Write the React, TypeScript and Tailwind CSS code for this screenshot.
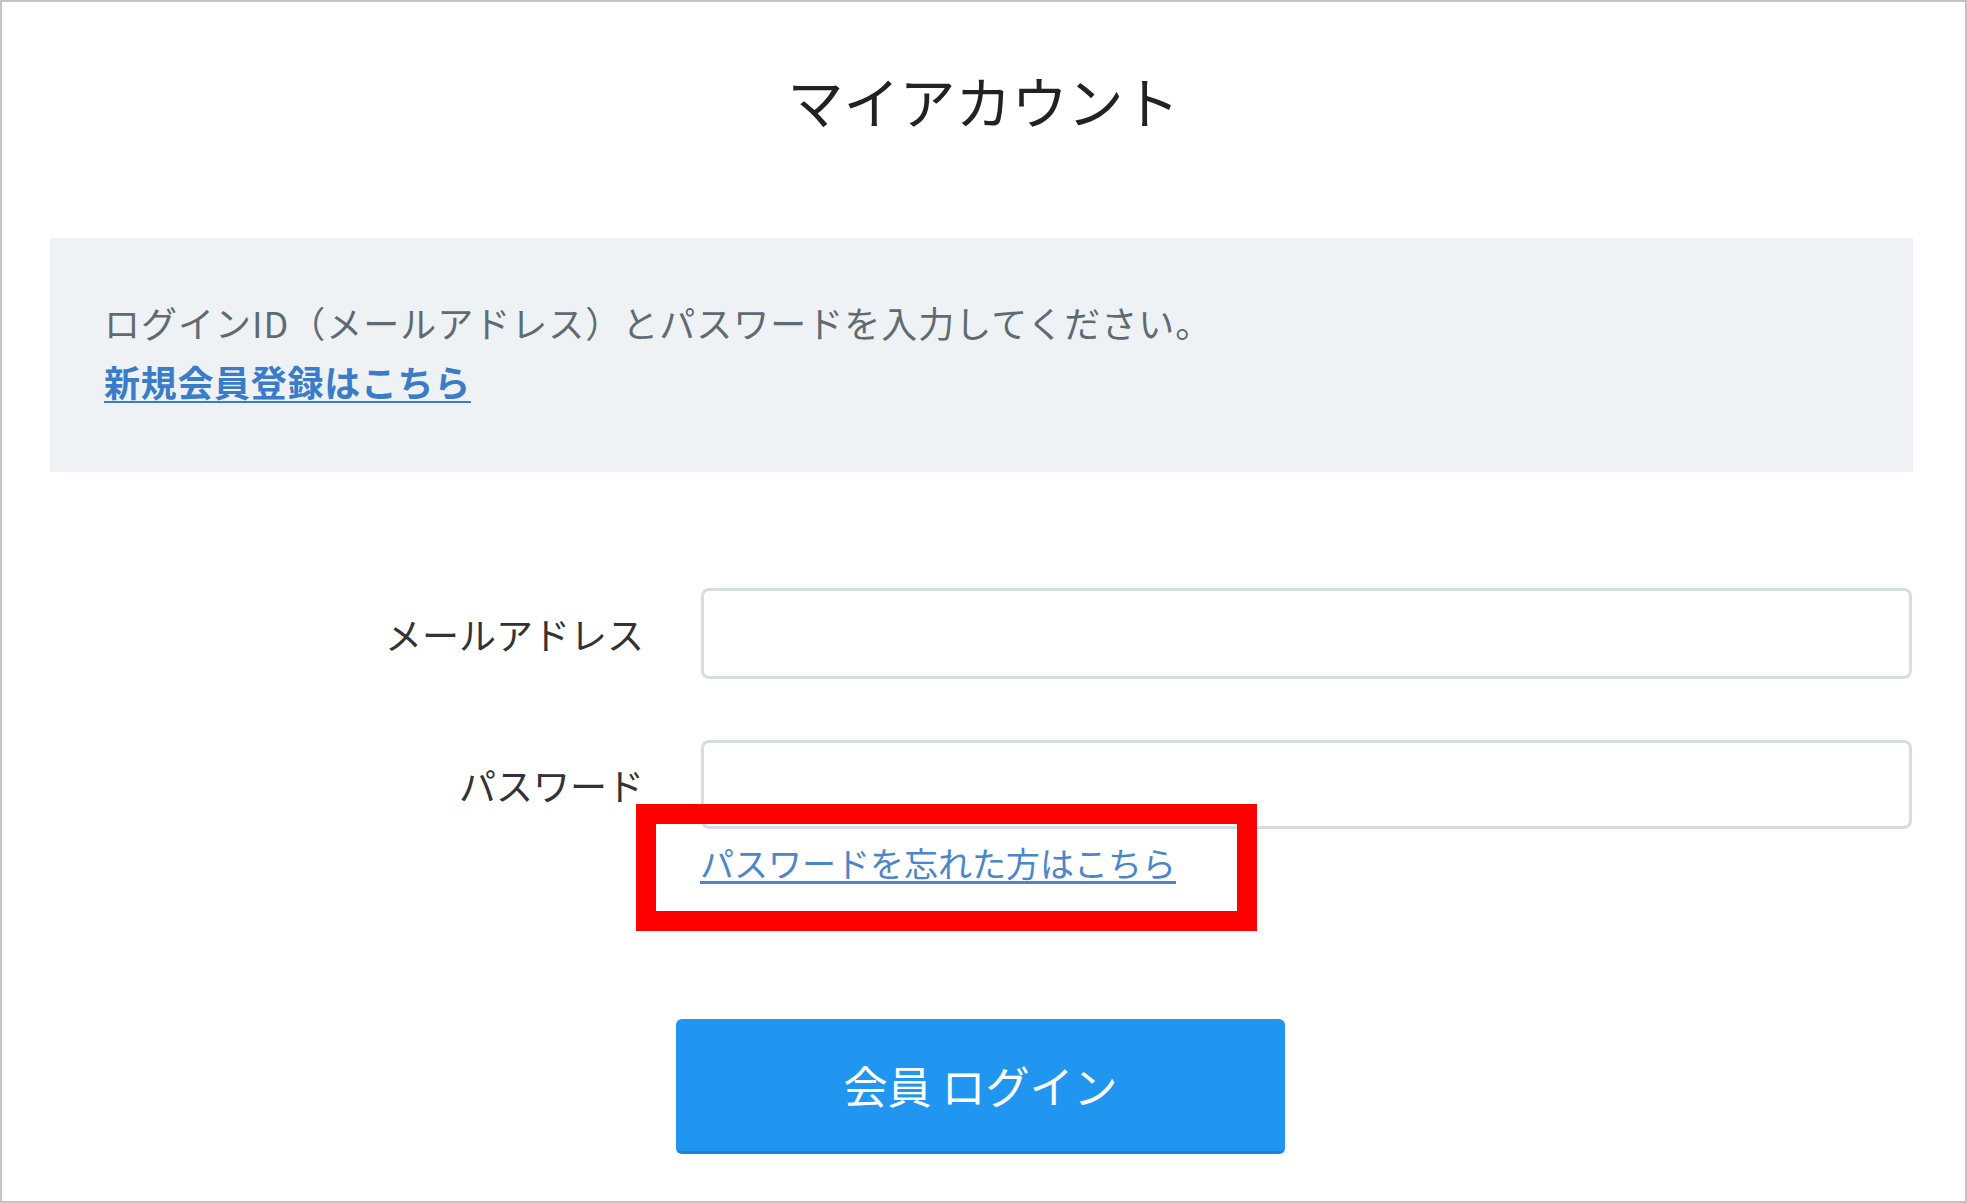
import React from "react";

export default function App() {
  const font = { fontFamily: '"Noto Sans CJK JP", "Noto Sans", sans-serif' };
  return (
    <div
      className="relative w-[1967px] h-[1203px] border-2 border-[#c4c4c4] bg-white overflow-hidden"
      style={font}
    >
      <div className="mt-[70px] h-[56px] leading-[56px] text-[56px] text-[#222] text-center">
        マイアカウント
      </div>

      <div className="mt-[110px] ml-[48px] w-[1863px] h-[234px] bg-[#eef2f5] pl-[54px] pt-[55px]">
        <div className="leading-[59px] text-[36px] tracking-[1px] text-[#5f6a72]">
          ログインID（メールアドレス）とパスワードを入力してください。
        </div>
        <div className="leading-[59px]">
          <a className="text-[36px] tracking-[0.7px] font-bold text-[#3a7cc7] underline decoration-2 underline-offset-4">
            新規会員登録はこちら
          </a>
        </div>
      </div>

      <div className="mt-[116px] flex flex-col gap-[61px]">
        <div className="flex items-center gap-[57px]">
          <label className="w-[642px] text-right text-[37px] leading-[40px] text-[#333]">
            メールアドレス
          </label>
          <div className="w-[1211px] h-[91px] border-[3px] border-[#d6dee3] rounded-[8px] bg-white" />
        </div>
        <div className="flex items-center gap-[57px]">
          <label className="w-[642px] text-right text-[37px] leading-[40px] text-[#333]">
            パスワード
          </label>
          <div className="w-[1211px] h-[89px] border-[3px] border-[#d6dee3] rounded-[8px] bg-white" />
        </div>
      </div>

      <div className="mt-[14px] flex">
        <div className="w-[698px] shrink-0" />
        <a className="text-[34px] leading-[40px] text-[#4a86c9] underline underline-offset-4">
          パスワードを忘れた方はこちら
        </a>
      </div>

      <div className="mt-[136px] ml-[674px]">
        <button className="w-[609px] h-[135px] rounded-[6px] bg-[#2196f1] border-b-[3px] border-[#1b84d6] text-white text-[44px] leading-[44px]">
          会員 ログイン
        </button>
      </div>

      <div className="absolute left-[634px] top-[802px] w-[621px] h-[127px] border-[20px] border-[#ff0000]" />
    </div>
  );
}
